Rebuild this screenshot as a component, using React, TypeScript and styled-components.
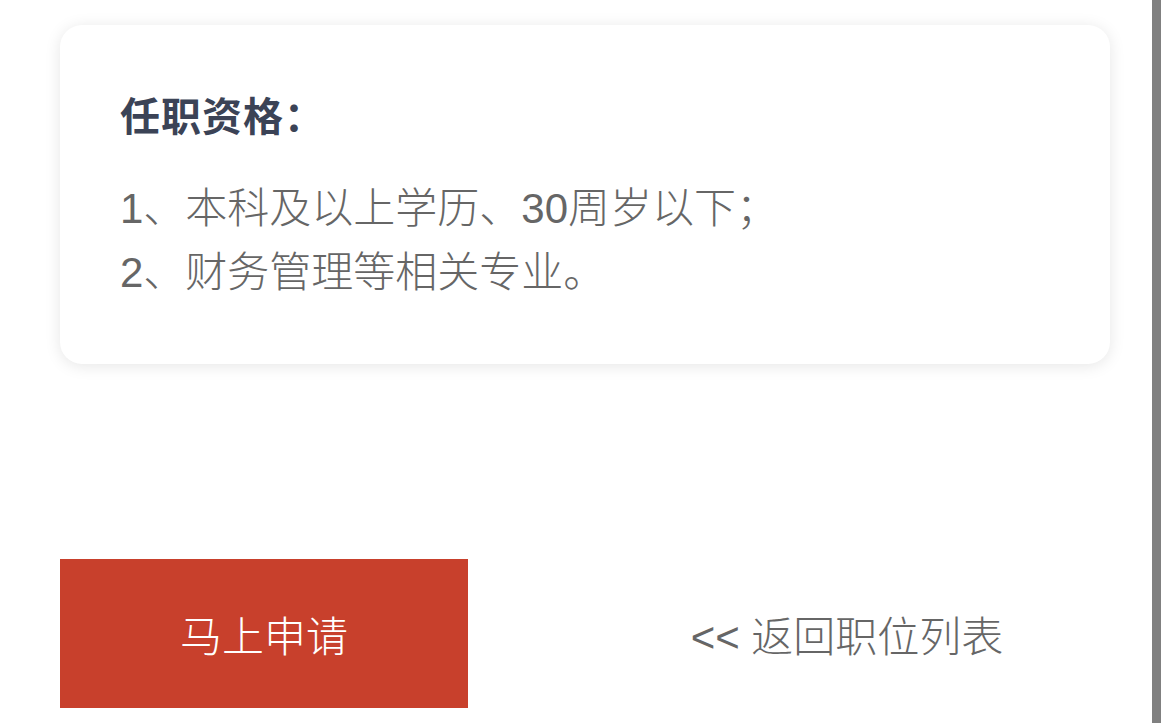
import styled, { createGlobalStyle } from "styled-components";

const GlobalStyle = createGlobalStyle`
  html, body {
    margin: 0;
    padding: 0;
    background: #ffffff;
  }

  body {
    font-family: "Liberation Sans", "Noto Sans CJK SC", sans-serif;
  }
`;

const Page = styled.div`
  display: flex;
  height: 723px;
  overflow: hidden;
`;

const Main = styled.div`
  flex: 1;
  display: flex;
  flex-direction: column;
  padding: 25px 42px 0 60px;
`;

const ScrollRail = styled.div`
  width: 9px;
  background: #808080;
  margin-right: 9px;
`;

const Card = styled.section`
  background: #ffffff;
  border-radius: 22px;
  box-shadow: 0 2px 16px rgba(0, 0, 0, 0.1);
  padding: 64px 60px 59px 60px;
`;

const Title = styled.h3`
  margin: 0 0 38px 0;
  font-family: "Noto Sans CJK SC", sans-serif;
  font-size: 40px;
  line-height: 50px;
  font-weight: 700;
  letter-spacing: 1px;
  color: #3b4356;
`;

const Lines = styled.div`
  font-size: 42px;
  line-height: 64px;
  font-weight: 300;
  color: #666666;
`;

const Line = styled.div``;

const Actions = styled.div`
  display: flex;
  align-items: center;
  margin-top: 195px;
`;

const ApplyButton = styled.button`
  width: 408px;
  height: 149px;
  border: none;
  border-radius: 0;
  background: #c8402c;
  color: #ffffff;
  font-family: inherit;
  font-size: 42px;
  font-weight: 300;
  cursor: pointer;
`;

const BackLink = styled.a`
  flex: 1;
  text-align: center;
  padding-left: 116px;
  font-size: 42px;
  font-weight: 300;
  color: #666666;
  text-decoration: none;
  cursor: pointer;
`;

export default function App() {
  return (
    <>
      <GlobalStyle />
      <Page>
        <Main>
          <Card>
            <Title>任职资格：</Title>
            <Lines>
              <Line>1、本科及以上学历、30周岁以下；</Line>
              <Line>2、财务管理等相关专业。</Line>
            </Lines>
          </Card>
          <Actions>
            <ApplyButton>马上申请</ApplyButton>
            <BackLink>&lt;&lt; 返回职位列表</BackLink>
          </Actions>
        </Main>
        <ScrollRail />
      </Page>
    </>
  );
}
